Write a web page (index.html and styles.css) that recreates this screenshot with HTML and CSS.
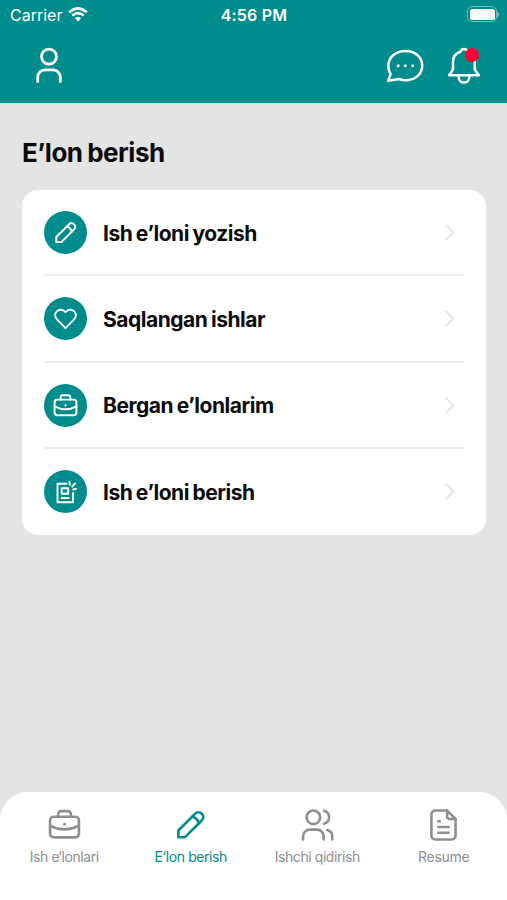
FILE: index.html
```html
<!DOCTYPE html>
<html lang="uz">
<head>
    <meta charset="UTF-8">
    <meta name="viewport" content="width=device-width, initial-scale=1.0">
    <title>E’lon berish</title>
    <link rel="stylesheet" href="styles.css">
</head>
<body>

    <!-- shared icons -->
    <svg class="sprite" width="0" height="0">
        <symbol id="pencil" viewBox="0 0 32 32">
            <path d="M4.200 28.300v-6.500L20.600 5.400a4.600 4.600 0 0 1 6.500 6.500L10.700 28.300z"/>
            <path d="M17.800 8.200q4.800 1.700 6.500 6.500"/>
        </symbol>
        <symbol id="briefcase" viewBox="0 0 32 32">
            <rect x="2" y="8.500" width="28" height="20" rx="3.500"/>
            <path d="M9.800 8.500V6a3 3 0 0 1 3-3h6.400a3 3 0 0 1 3 3v2.500"/>
            <path d="M2 17q14 7.500 28 0"/>
            <circle class="solid" cx="16" cy="15.800" r="1.400"/>
        </symbol>
    </svg>

    <header class="header">
        <div class="status">
            <div class="carrier">
                <span>Carrier</span>
                <svg class="wifi" viewBox="0 0 20 15">
                    <path d="M1.200 5.200Q10-2.600 18.800 5.200"/>
                    <path d="M4.300 8.500q5.700-4.800 11.400 0"/>
                    <path class="solid" d="M10 14.400l-3.100-3.100q3.100-2.400 6.200 0z"/>
                </svg>
            </div>
            <span class="time">4:56 PM</span>
            <div class="battery"><span></span></div>
        </div>
        <div class="toolbar">
            <svg class="user" viewBox="0 0 26 37">
                <circle cx="13" cy="9.600" r="7.500"/>
                <path d="M1.700 34.600v-4.500a7.300 7.300 0 0 1 7.300-7.300h8a7.300 7.300 0 0 1 7.300 7.300v4.500"/>
            </svg>
            <div class="actions">
                <svg class="chat" viewBox="0 0 38 34">
                    <path d="M2.200 31.700L4.600 25C3 22.500 2.300 20 2.300 17 2.300 8.300 9.500 2 19.500 2S36.200 8.300 36.200 16.700 29 31.300 19.500 31.300c-2.500 0-4.500-.5-6.500-1.300z"/>
                    <circle class="solid" cx="12.200" cy="16.800" r="1.500"/>
                    <circle class="solid" cx="19.400" cy="16.800" r="1.500"/>
                    <circle class="solid" cx="26.600" cy="16.800" r="1.500"/>
                </svg>
                <div class="bell">
                    <svg viewBox="0 0 34 38">
                        <path d="M2.200 28.300h29.600l-4-5.800V14.500c0-5-3-8.300-7.200-9.700a3.700 3.700 0 0 0-7.200 0C9 6.200 6 9.800 6 15v7.500z"/>
                        <path d="M11.700 28.800v1.500a5.300 5.300 0 0 0 10.600 0v-1.500"/>
                    </svg>
                    <span class="badge"></span>
                </div>
            </div>
        </div>
    </header>

    <main class="content">
        <h1>E’lon berish</h1>
        <div class="card">
            <a class="row">
                <span class="circle"><svg class="shared"><use href="#pencil"/></svg></span>
                <span class="label">Ish e’loni yozish</span>
                <svg class="arrow" viewBox="0 0 10 18"><path d="M1 1.500l7.500 7.500L1 16.500"/></svg>
            </a>
            <a class="row">
                <span class="circle">
                    <svg class="heart" viewBox="0 0 24 24">
                        <path d="M12 22L2.900 12.700C.6 10.300.6 6.700 2.900 4.500s6-2.200 8.200 0l.9.900.9-.9c2.200-2.200 5.900-2.200 8.200 0s2.300 5.800 0 8.200z"/>
                    </svg>
                </span>
                <span class="label">Saqlangan ishlar</span>
                <svg class="arrow" viewBox="0 0 10 18"><path d="M1 1.500l7.500 7.500L1 16.500"/></svg>
            </a>
            <a class="row">
                <span class="circle"><svg class="shared"><use href="#briefcase"/></svg></span>
                <span class="label">Bergan e’lonlarim</span>
                <svg class="arrow" viewBox="0 0 10 18"><path d="M1 1.500l7.500 7.500L1 16.500"/></svg>
            </a>
            <a class="row">
                <span class="circle">
                    <svg viewBox="0 0 24 24">
                        <path d="M12.500 3.800H3.500v18.500h15.500V13"/>
                        <path d="M7.700 8.200h6.500v5.500H7.700zM7.700 18h7"/>
                        <path d="M15.300 2l.6 2.700M18.300 6.500l2.700-3M19.200 9.500l2.800-.6"/>
                    </svg>
                </span>
                <span class="label">Ish e’loni berish</span>
                <svg class="arrow" viewBox="0 0 10 18"><path d="M1 1.500l7.500 7.500L1 16.500"/></svg>
            </a>
        </div>
    </main>

    <nav class="tabs">
        <a class="tab">
            <svg><use href="#briefcase"/></svg>
            <span>Ish e‘lonlari</span>
        </a>
        <a class="tab active">
            <svg><use href="#pencil"/></svg>
            <span>E‘lon berish</span>
        </a>
        <a class="tab">
            <svg viewBox="0 0 32 32">
                <circle cx="12" cy="9" r="6.600"/>
                <path d="M2 30.500v-3a6.500 6.500 0 0 1 6.500-6.500h7a6.500 6.500 0 0 1 6.500 6.500v3"/>
                <path d="M22.300 2.700a6.500 6.500 0 0 1 0 12.600M25.300 21.300a6.500 6.500 0 0 1 5 6.300v2.900"/>
            </svg>
            <span>Ishchi qidirish</span>
        </a>
        <a class="tab">
            <svg viewBox="0 0 32 32">
                <path d="M19.500 2.500H8a3.700 3.700 0 0 0-3.700 3.700v20.600A3.700 3.700 0 0 0 8 30.500h16a3.700 3.700 0 0 0 3.700-3.700V10.700z"/>
                <path d="M19.500 2.500v5.700a2.500 2.500 0 0 0 2.500 2.500h5.700M11 12.800h1.500M11 18.500h10M11 24h10"/>
            </svg>
            <span class="wide">Resume</span>
        </a>
    </nav>

</body>
</html>
```
FILE: styles.css
```css
* {
    box-sizing: border-box;
}
body {
    margin: 0;
    height: 100vh;
    display: flex;
    flex-direction: column;
    overflow: hidden;
    background: #e4e4e4;
    color: #0a0a0a;
    font-family: Inter, "Liberation Sans", sans-serif;
}
svg {
    display: block;
    fill: none;
    stroke: currentColor;
    stroke-width: 2.5;
    stroke-linecap: round;
    stroke-linejoin: round;
}
.sprite {
    position: absolute;
}
.solid {
    fill: currentColor;
    stroke: none;
}

/* header */
.header {
    height: 103px;
    background: #008c8c;
    color: white;
}
.status {
    height: 30px;
    padding: 0 8px 0 10px;
    display: grid;
    grid-template-columns: 1fr auto 1fr;
    align-items: center;
    font-size: 16px;
}
.carrier {
    display: flex;
    align-items: center;
    gap: 6px;
}
.wifi {
    width: 20px;
    height: 15px;
    margin-top: -1px;
    stroke-width: 2.6;
    stroke-linecap: butt;
}
.time {
    margin-right: 1px;
    font-weight: 600;
    letter-spacing: 0.2px;
}
.battery {
    justify-self: end;
    display: flex;
    align-items: center;
    margin-top: -2px;
}
.battery span {
    width: 30px;
    height: 16px;
    border: 1.5px solid #70bcbc;
    border-radius: 5px;
    background: white;
    background-clip: content-box;
    padding: 1.5px;
}
.battery::after {
    content: '';
    width: 2px;
    height: 5px;
    background: #70bcbc;
    border-radius: 0 2px 2px 0;
}
.toolbar {
    height: 71px;
    padding: 0 26px 0 36px;
    display: flex;
    align-items: center;
    justify-content: space-between;
}
.user {
    width: 26px;
    height: 37px;
    stroke-width: 2.8;
}
.actions {
    display: flex;
    align-items: center;
    gap: 23px;
}
.chat {
    width: 38px;
    height: 34px;
}
.bell {
    position: relative;
    width: 34px;
    height: 38px;
}
.badge {
    position: absolute;
    top: 1px;
    right: 2px;
    width: 14px;
    height: 14px;
    border-radius: 50%;
    background: #ff0030;
}

/* list */
.content {
    flex: 1;
    padding: 33px 21px 0 22px;
}
h1 {
    margin: 0;
    height: 54px;
    padding-top: 1px;
    line-height: 32px;
    font-size: 26px;
    font-weight: 650;
    letter-spacing: -0.5px;
    word-spacing: -1px;
}
.card {
    height: 345px;
    padding: 0 22px;
    background: white;
    border-radius: 16px;
}
.row {
    height: 86.3px;
    padding-top: 1px;
    display: flex;
    align-items: center;
    border-bottom: 2px solid #ececec;
}
.row:last-child {
    border-bottom-color: transparent;
}
.circle {
    width: 43px;
    height: 43px;
    margin-right: 16px;
    display: flex;
    align-items: center;
    justify-content: center;
    border-radius: 50%;
    background: #008c8c;
    color: white;
}
.circle svg {
    width: 24px;
    height: 24px;
    stroke-width: 1.9;
}
.circle .shared {
    width: 25px;
    height: 25px;
    stroke-width: 2.5;
}
.circle .heart {
    width: 23px;
    height: 23px;
}
.label {
    flex: 1;
    padding-top: 1px;
    font-size: 21px;
    font-weight: 650;
    letter-spacing: -0.47px;
    word-spacing: -1px;
}
.arrow {
    width: 10px;
    height: 17px;
    margin-right: 9px;
    color: #e4e4e4;
    stroke-width: 2;
}

/* bottom tabs */
.tabs {
    height: 108px;
    padding: 16px 0 0 1px;
    display: grid;
    grid-template-columns: repeat(4, 1fr);
    background: white;
    border-radius: 28px 28px 0 0;
}
.tab {
    display: flex;
    flex-direction: column;
    align-items: center;
    gap: 7px;
    color: #8e8e8e;
    font-size: 14px;
    line-height: 17px;
    letter-spacing: -0.42px;
}
.tab svg {
    width: 33px;
    height: 33px;
}
.tab.active {
    color: #008c8c;
}
.wide {
    letter-spacing: -0.3px;
}
```
